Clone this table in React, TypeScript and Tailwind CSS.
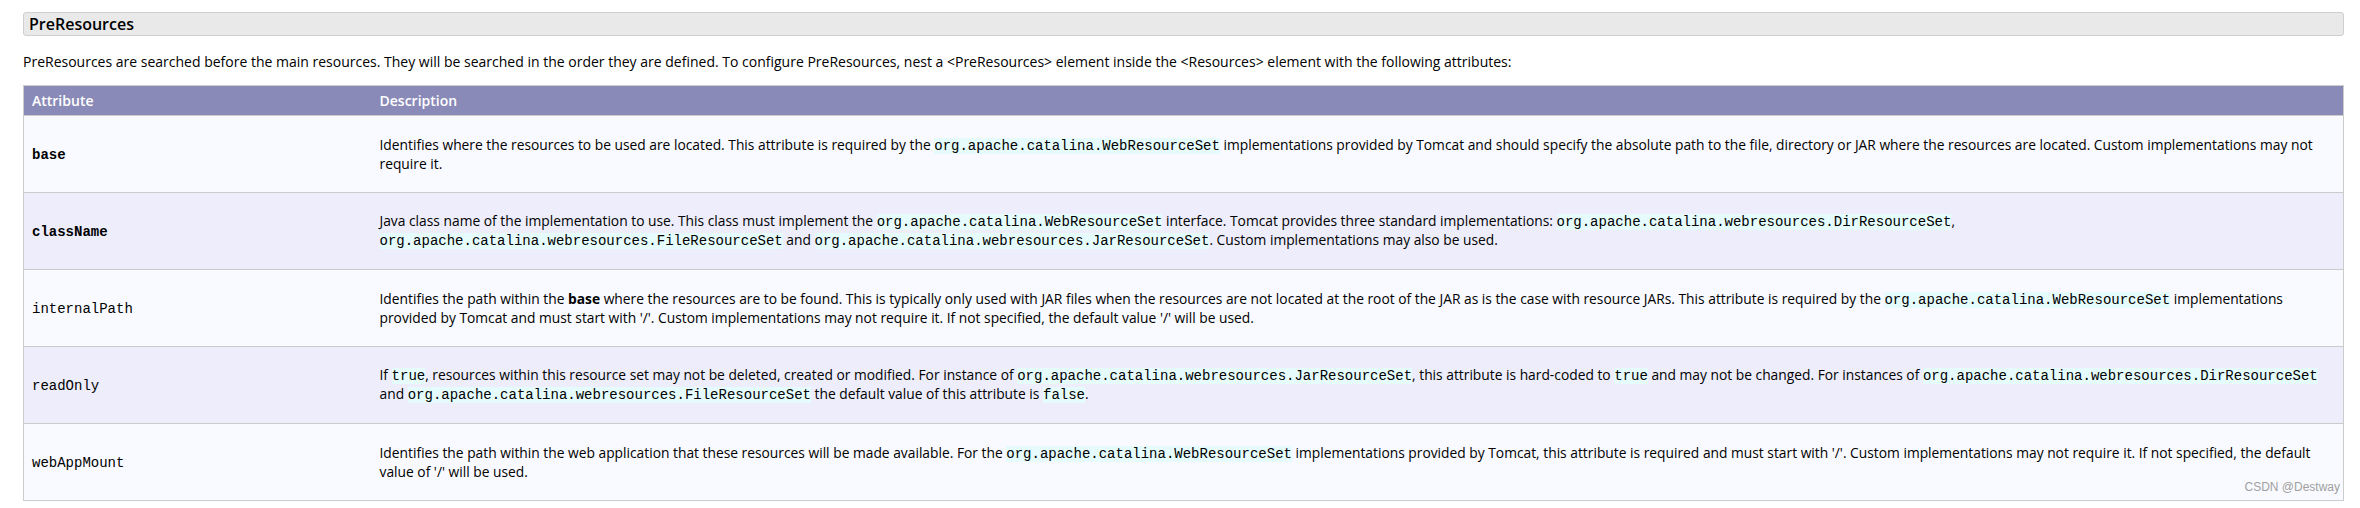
import type { ReactNode } from 'react'

const C = ({ children }: { children: ReactNode }) => (
  <code className="bg-[#e6fcfc] font-['Liberation_Mono',monospace] text-[14px]">{children}</code>
)

const rows: { name: string; bold?: boolean; desc: ReactNode }[] = [
  {
    name: 'base',
    bold: true,
    desc: (
      <>
        Identifies where the resources to be used are located. This attribute is required by the{' '}
        <C>org.apache.catalina.WebResourceSet</C> implementations provided by Tomcat and should specify the
        absolute path to the file, directory or JAR where the resources are located. Custom implementations may
        not require it.
      </>
    ),
  },
  {
    name: 'className',
    bold: true,
    desc: (
      <>
        Java class name of the implementation to use. This class must implement the{' '}
        <C>org.apache.catalina.WebResourceSet</C> interface. Tomcat provides three standard implementations:{' '}
        <C>org.apache.catalina.webresources.DirResourceSet</C>,{' '}
        <C>org.apache.catalina.webresources.FileResourceSet</C> and{' '}
        <C>org.apache.catalina.webresources.JarResourceSet</C>. Custom implementations may also be used.
      </>
    ),
  },
  {
    name: 'internalPath',
    desc: (
      <>
        Identifies the path within the <strong className="font-bold">base</strong> where the resources are to be
        found. This is typically only used with JAR files when the resources are not located at the root of the
        JAR as is the case with resource JARs. This attribute is required by the{' '}
        <C>org.apache.catalina.WebResourceSet</C> implementations provided by Tomcat and must start with '/'.
        Custom implementations may not require it. If not specified, the default value '/' will be used.
      </>
    ),
  },
  {
    name: 'readOnly',
    desc: (
      <>
        If <C>true</C>, resources within this resource set may not be deleted, created or modified. For instance
        of <C>org.apache.catalina.webresources.JarResourceSet</C>, this attribute is hard-coded to <C>true</C> and
        may not be changed. For instances of <C>org.apache.catalina.webresources.DirResourceSet</C> and{' '}
        <C>org.apache.catalina.webresources.FileResourceSet</C> the default value of this attribute is{' '}
        <C>false</C>.
      </>
    ),
  },
  {
    name: 'webAppMount',
    desc: (
      <>
        Identifies the path within the web application that these resources will be made available. For the{' '}
        <C>org.apache.catalina.WebResourceSet</C> implementations provided by Tomcat, this attribute is required
        and must start with '/'. Custom implementations may not require it. If not specified, the default value of
        '/' will be used.
      </>
    ),
  },
]

export default function App() {
  return (
    <div className="relative h-[508px] w-[2360px] bg-white pl-[23px] pr-[16px] pt-[12px] font-['Open_Sans',sans-serif] text-[13.8px] leading-[18px] text-black">
      <h3 className="flex h-[24px] items-center rounded-[3px] border border-[#cfcfcf] bg-[#e9e9e9] px-[5px] text-[16px] font-semibold">
        PreResources
      </h3>

      <p className="mt-[17px] text-[14px]">
        PreResources are searched before the main resources. They will be searched in the order they are defined. To
        configure PreResources, nest a &lt;PreResources&gt; element inside the &lt;Resources&gt; element with the
        following attributes:
      </p>

      <table className="mt-[14px] w-full border-collapse border border-[#cccccc]">
        <thead>
          <tr className="h-[30px] bg-[#8a8ab8] text-left text-[14px] text-white">
            <th className="w-[348px] px-[8px] font-semibold">Attribute</th>
            <th className="px-[8px] font-semibold">Description</th>
          </tr>
        </thead>
        <tbody>
          {rows.map((r, i) => (
            <tr
              key={r.name}
              className={i % 2 === 0 ? 'h-[77px] bg-[#f9faff]' : 'h-[77px] bg-[#ededfb]'}
            >
              <td className="border-t border-[#cccccc] px-[8px] align-middle">
                <code
                  className={
                    r.bold
                      ? "font-['Liberation_Mono',monospace] text-[14px] font-bold"
                      : "font-['Liberation_Mono',monospace] text-[14px]"
                  }
                >
                  {r.name}
                </code>
              </td>
              <td className="border-t border-[#cccccc] pl-[8px] pr-[4px] align-middle">{r.desc}</td>
            </tr>
          ))}
        </tbody>
      </table>

      {/* watermark */}
      <span className="absolute right-[20px] bottom-[12px] font-['Liberation_Sans',sans-serif] text-[12px] text-[#a0a0a0]">
        CSDN @Destway
      </span>
    </div>
  )
}
